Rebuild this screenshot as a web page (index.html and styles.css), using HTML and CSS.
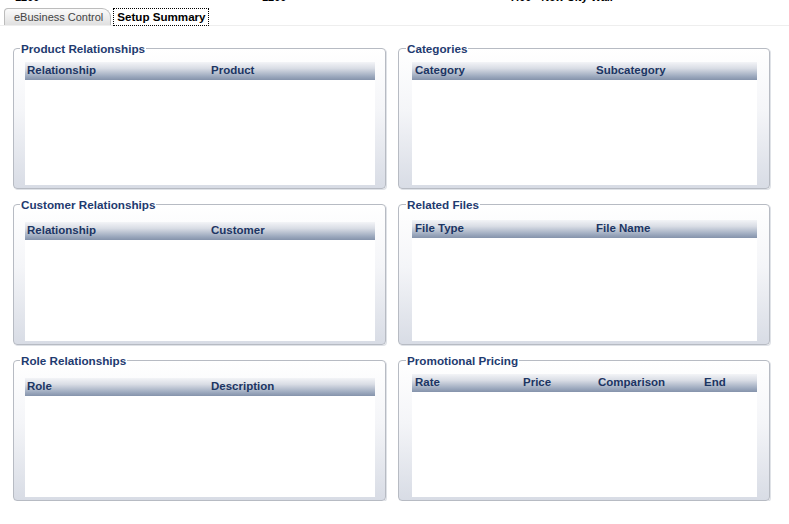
FILE: index.html
```html
<!DOCTYPE html>
<html lang="en">
<head>
    <meta charset="UTF-8">
    <meta name="viewport" content="width=device-width, initial-scale=1.0">
    <title>Setup Summary</title>
    <link rel="stylesheet" href="styles.css">
</head>
<body>
    <div class="summary-strip">
        <span class="strip-a">1200</span>
        <span class="strip-b">1200</span>
        <span class="strip-c">7.00 - New City Wall</span>
    </div>

    <div class="tab-bar">
        <div class="tab">eBusiness Control</div>
        <div class="tab active">Setup Summary</div>
    </div>

    <div class="panels">
        <fieldset class="panel">
            <legend>Product Relationships</legend>
            <div class="list-head cols-two">
                <span>Relationship</span>
                <span>Product</span>
            </div>
            <div class="list-body"></div>
        </fieldset>

        <fieldset class="panel panel-right">
            <legend>Categories</legend>
            <div class="list-head cols-two-r">
                <span>Category</span>
                <span>Subcategory</span>
            </div>
            <div class="list-body"></div>
        </fieldset>

        <fieldset class="panel panel-low">
            <legend>Customer Relationships</legend>
            <div class="list-head cols-two">
                <span>Relationship</span>
                <span>Customer</span>
            </div>
            <div class="list-body"></div>
        </fieldset>

        <fieldset class="panel panel-right panel-mid">
            <legend>Related Files</legend>
            <div class="list-head cols-two-r">
                <span>File Type</span>
                <span>File Name</span>
            </div>
            <div class="list-body"></div>
        </fieldset>

        <fieldset class="panel panel-low">
            <legend>Role Relationships</legend>
            <div class="list-head cols-two">
                <span>Role</span>
                <span>Description</span>
            </div>
            <div class="list-body"></div>
        </fieldset>

        <fieldset class="panel panel-right">
            <legend>Promotional Pricing</legend>
            <div class="list-head cols-four">
                <span>Rate</span>
                <span>Price</span>
                <span>Comparison</span>
                <span>End</span>
            </div>
            <div class="list-body"></div>
        </fieldset>
    </div>
</body>
</html>
```

FILE: styles.css
```css
* {
    margin: 0;
    padding: 0;
    box-sizing: border-box;
}

body {
    font-family: 'Liberation Sans', Arial, sans-serif;
    font-size: 11px;
    background: #ffffff;
    color: #000;
}

/* cut-off record line above the tabs */
.summary-strip {
    height: 3px;
    overflow: hidden;
    display: flex;
    padding-left: 15px;
}

.summary-strip span {
    display: block;
    font-weight: bold;
    font-size: 11px;
    line-height: 11px;
    margin-top: -8px;
}

.strip-a { width: 247px; }
.strip-b { width: 248px; }

/* tabs */
.tab-bar {
    display: flex;
    gap: 2px;
    margin-top: 5px;
    padding-left: 4px;
    height: 18px;
    border-bottom: 1px solid #eeeeee;
}

.tab {
    height: 17px;
    line-height: 16px;
    padding: 0 7px 0 9px;
    color: #444;
    background: linear-gradient(#fbfbfb, #e0e0e0);
    border: 1px solid #bcbcbc;
    border-bottom: none;
    border-radius: 4px 9px 0 0;
}

.tab.active {
    background: #ffffff;
    color: #000;
    font-weight: bold;
    font-size: 11.6px;
    padding: 0 2px 0 3px;
    border: 1px dotted #000;
    border-radius: 0;
    height: 18px;
}

/* panels */
.panels {
    display: grid;
    grid-template-columns: 373px 372px;
    grid-template-rows: repeat(3, 147px);
    column-gap: 12px;
    row-gap: 9px;
    padding-left: 13px;
    margin-top: 16px;
}

.panel {
    display: flex;
    flex-direction: column;
    min-width: 0;
    border: 1px solid #b7bbc3;
    border-radius: 4px;
    padding: 7px 10px 3px 11px;
    background: linear-gradient(#ffffff 0%, #f4f5f8 45%, #d8dce5 100%);
    box-shadow: 1px 1px 0 #dfe2e7;
}

.panel legend {
    font-weight: bold;
    font-size: 11.7px;
    line-height: 13px;
    color: #1f3b70;
    padding: 0 1px;
    margin-left: -5px;
}

.panel-right {
    padding-left: 13px;
    padding-right: 12px;
}

.panel-right legend {
    margin-left: -6px;
}

.panel-low {
    padding-top: 11px;
}

.panel-mid {
    padding-top: 9px;
}

.list-head {
    display: grid;
    height: 18px;
    line-height: 17px;
    padding-left: 2px;
    font-weight: bold;
    font-size: 11.5px;
    color: #1c3563;
    background: linear-gradient(#f3f4f7 0%, #d9dde5 35%, #9ca9be 80%, #8593ab 100%);
}

.cols-two {
    grid-template-columns: 184px 1fr;
}

.cols-two-r {
    grid-template-columns: 181px 1fr;
    padding-left: 3px;
}

.cols-four {
    grid-template-columns: 108px 75px 106px 1fr;
    padding-left: 3px;
}

.list-body {
    flex: 1;
    background: #ffffff;
}
```
